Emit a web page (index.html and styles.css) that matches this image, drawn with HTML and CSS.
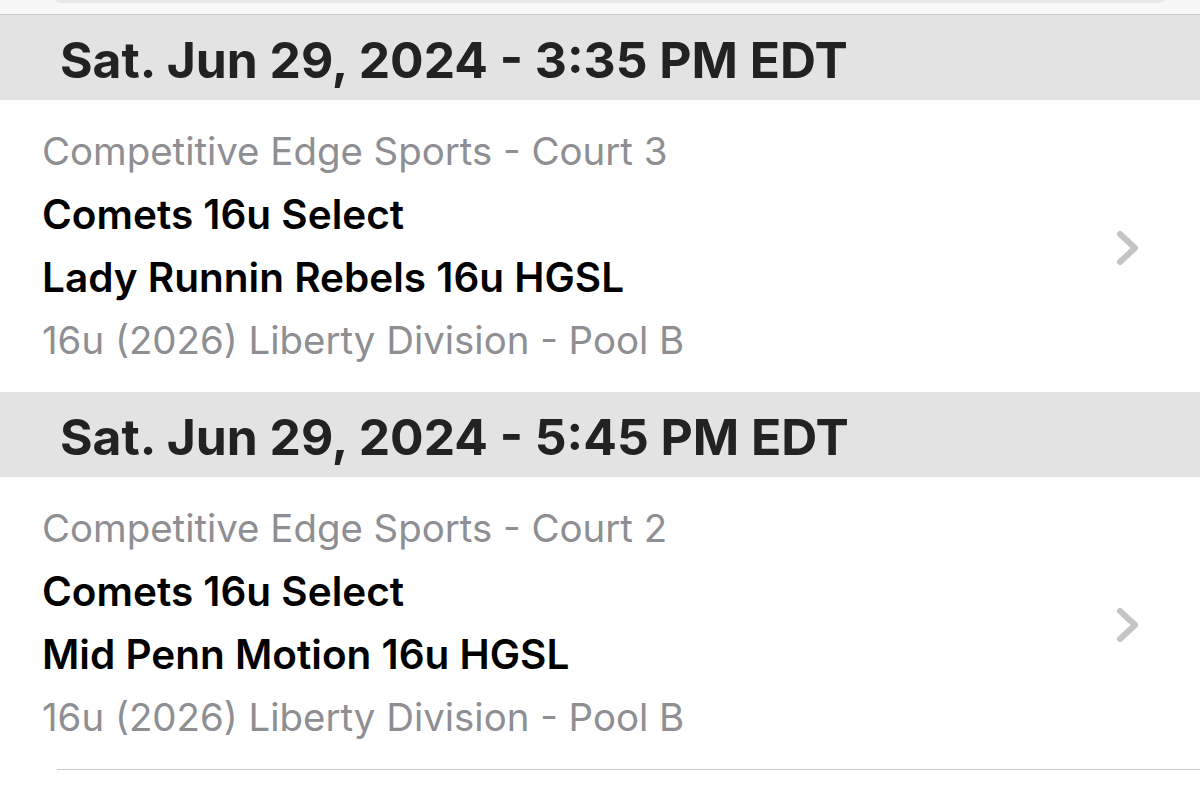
FILE: index.html
```html
<!DOCTYPE html>
<html>
<head>
<meta charset="utf-8">
<link rel="stylesheet" href="styles.css">
</head>
<body>
<div class="topbar"><div class="search"></div></div>
<div class="list">
  <div class="header">Sat. Jun 29, 2024 - 3:35 PM EDT</div>
  <div class="row">
    <div class="info">
      <div class="sub">Competitive Edge Sports - Court 3</div>
      <div class="team">Comets 16u Select</div>
      <div class="team">Lady Runnin Rebels 16u HGSL</div>
      <div class="sub">16u (2026) Liberty Division - Pool B</div>
    </div>
    <svg class="chev" width="26" height="38" viewBox="0 0 26 38"><path d="M5 5 L20 19 L5 33" fill="none" stroke="#c4c4c7" stroke-width="6" stroke-linecap="round" stroke-linejoin="round"/></svg>
  </div>
  <div class="header">Sat. Jun 29, 2024 - 5:45 PM EDT</div>
  <div class="row">
    <div class="info">
      <div class="sub">Competitive Edge Sports - Court 2</div>
      <div class="team">Comets 16u Select</div>
      <div class="team">Mid Penn Motion 16u HGSL</div>
      <div class="sub">16u (2026) Liberty Division - Pool B</div>
    </div>
    <svg class="chev" width="26" height="38" viewBox="0 0 26 38"><path d="M5 5 L20 19 L5 33" fill="none" stroke="#c4c4c7" stroke-width="6" stroke-linecap="round" stroke-linejoin="round"/></svg>
  </div>
  <div class="sep"></div>
</div>
</body>
</html>
```
FILE: styles.css
```css
html, body {
  margin: 0;
  padding: 0;
  background: #ffffff;
  font-family: Inter, "Noto Sans", sans-serif;
}
.topbar {
  height: 14px;
  background: #f7f7f7;
  border-bottom: 1px solid #cacaca;
  overflow: hidden;
}
.search {
  margin: -40px 30px 0 50px;
  height: 43px;
  background: #e8e8ea;
  border-radius: 12px;
}
.header {
  height: 85px;
  background: #e3e3e3;
  color: #222222;
  font-weight: 700;
  font-size: 49.8px;
  padding-left: 60px;
  display: flex;
  align-items: center;
  box-sizing: border-box;
  padding-top: 4px;
}
.row {
  display: flex;
  align-items: center;
  padding: 20px 59px 20px 42px;
  height: 292px;
  box-sizing: border-box;
}
.info {
  flex: 1;
}
.sub, .team {
  height: 63px;
  line-height: 63px;
  white-space: nowrap;
}
.sub {
  color: #8e8e93;
  font-size: 38.4px;
}
.team {
  color: #000;
  font-weight: 600;
  font-size: 40.5px;
}
.chev {
  margin-top: 4px;
}
.sep {
  margin-left: 57px;
  height: 1px;
  background: #cccccc;
}
```
